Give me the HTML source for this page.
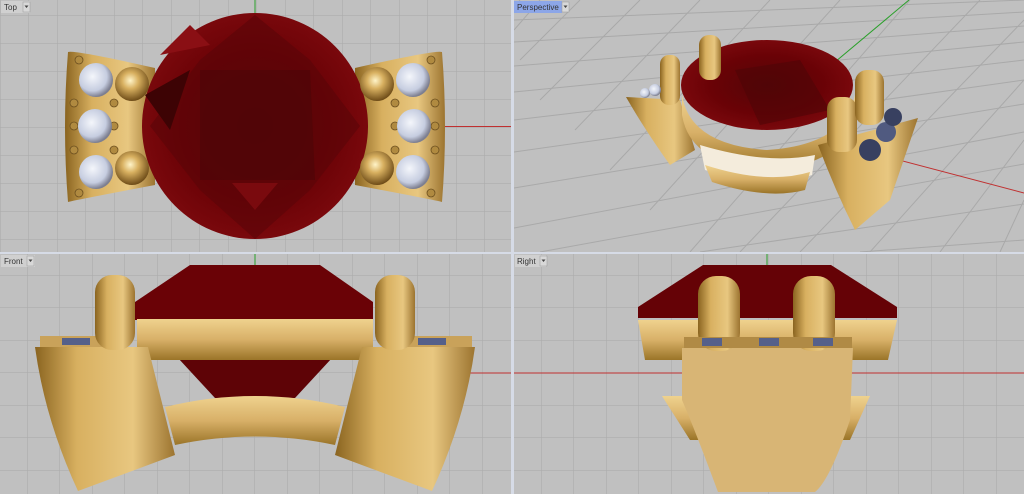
<!DOCTYPE html><html><head><style>
html,body{margin:0;padding:0;background:#d6dbe6;}
svg{display:block}
text{font-family:"Liberation Sans",sans-serif;font-size:8px;fill:#333}
</style></head><body>
<svg width="1024" height="494" viewBox="0 0 1024 494" xmlns="http://www.w3.org/2000/svg">
<defs>
<pattern id="g" width="28.5" height="28" patternUnits="userSpaceOnUse" x="0" y="15"><path d="M0 0H28.5M0 0V28" stroke="#a9a9a9" stroke-width="1" fill="none"/></pattern>
<pattern id="g3" width="32.5" height="32.5" patternUnits="userSpaceOnUse" x="27" y="15"><path d="M0 0H32.5M0 0V32.5" stroke="#a9a9a9" stroke-width="1" fill="none"/></pattern>
<pattern id="g2" width="32.5" height="32.5" patternUnits="userSpaceOnUse" x="541" y="15"><path d="M0 0H32.5M0 0V32.5" stroke="#a9a9a9" stroke-width="1" fill="none"/></pattern>
<linearGradient id="gold" x1="0" y1="0" x2="0" y2="1"><stop offset="0" stop-color="#efd28e"/><stop offset=".5" stop-color="#d8b068"/><stop offset="1" stop-color="#9a7428"/></linearGradient>
<linearGradient id="goldh" x1="0" y1="0" x2="1" y2="0"><stop offset="0" stop-color="#8a6420"/><stop offset=".3" stop-color="#d8b060"/><stop offset=".7" stop-color="#e8c780"/><stop offset="1" stop-color="#9c7430"/></linearGradient>
<radialGradient id="ball" cx=".45" cy=".4" r=".6"><stop offset="0" stop-color="#fff4c8"/><stop offset=".4" stop-color="#d8b060"/><stop offset="1" stop-color="#6e4c18"/></radialGradient>
<radialGradient id="dia" cx=".4" cy=".4" r=".6"><stop offset="0" stop-color="#f4f6fb"/><stop offset=".7" stop-color="#c6cde0"/><stop offset="1" stop-color="#7d7f90"/></radialGradient>
<radialGradient id="ruby" cx=".5" cy=".5" r=".55"><stop offset="0" stop-color="#540608"/><stop offset=".6" stop-color="#6a0206"/><stop offset="1" stop-color="#7e0a0e"/></radialGradient>
<clipPath id="c1"><rect x="0" y="0" width="511" height="252"/></clipPath>
<clipPath id="c2"><rect x="514" y="0" width="510" height="252"/></clipPath>
<clipPath id="c3"><rect x="0" y="254" width="511" height="240"/></clipPath>
<clipPath id="c4"><rect x="514" y="254" width="510" height="240"/></clipPath>
</defs>

<!-- TOP -->
<g clip-path="url(#c1)">
<rect x="0" y="0" width="511" height="252" fill="#c0c0c0"/>
<rect x="0" y="0" width="511" height="252" fill="url(#g)"/>
<line x1="255" y1="0" x2="255" y2="16" stroke="#2aa02a"/>
<line x1="445" y1="126.5" x2="511" y2="126.5" stroke="#c03030"/>
<path d="M68 52 Q75 50 155 68 L155 185 Q75 200 68 202 Q62 127 68 52Z" fill="url(#goldh)"/>
<path d="M442 52 Q435 50 355 68 L355 185 Q435 200 442 202 Q448 127 442 52Z" fill="url(#goldh)"/>
<g fill="#b08a40" stroke="#6d5020" stroke-width=".8">
<circle cx="79" cy="60" r="4"/><circle cx="74" cy="103" r="4"/><circle cx="74" cy="126" r="4"/><circle cx="74" cy="150" r="4"/><circle cx="79" cy="193" r="4"/>
<circle cx="114" cy="103" r="4"/><circle cx="114" cy="126" r="4"/><circle cx="114" cy="150" r="4"/>
<circle cx="431" cy="60" r="4"/><circle cx="435" cy="103" r="4"/><circle cx="435" cy="126" r="4"/><circle cx="435" cy="150" r="4"/><circle cx="431" cy="193" r="4"/>
<circle cx="395" cy="103" r="4"/><circle cx="395" cy="126" r="4"/><circle cx="395" cy="150" r="4"/>
</g>
<g fill="url(#dia)">
<circle cx="96" cy="80" r="17"/><circle cx="95" cy="126" r="17"/><circle cx="96" cy="172" r="17"/>
<circle cx="413" cy="80" r="17"/><circle cx="414" cy="126" r="17"/><circle cx="413" cy="172" r="17"/>
</g>
<circle cx="255" cy="126" r="113" fill="url(#ruby)"/>
<path d="M255 15 L200 60 L150 126 L200 190 L255 239 L310 190 L360 126 L310 60Z" fill="#5a0508" opacity=".6"/>
<path d="M200 70 L310 70 L315 180 L200 180Z" fill="#4e0507" opacity=".7"/>
<path d="M160 55 L190 25 L210 45Z" fill="#8a0f14"/>
<path d="M145 95 L190 70 L170 130Z" fill="#3d0304"/>
<path d="M255 210 L232 183 L278 183Z" fill="#7a0a0e"/>
<circle cx="132" cy="84" r="17" fill="url(#ball)"/><circle cx="132" cy="168" r="17" fill="url(#ball)"/>
<circle cx="377" cy="84" r="17" fill="url(#ball)"/><circle cx="377" cy="168" r="17" fill="url(#ball)"/>
<rect x="1" y="1" width="29" height="12" fill="#d0d0d0"/><text x="4" y="10">Top</text><rect x="23" y="2" width="7" height="10" fill="#d8d8d8" stroke="#999" stroke-width=".5"/><path d="M24.5 5.5h4l-2 2.5z" fill="#444"/>
</g>

<!-- PERSPECTIVE -->
<g clip-path="url(#c2)">
<rect x="514" y="0" width="510" height="252" fill="#c0c0c0"/>
<g stroke="#a9a9a9" stroke-width="1" fill="none">
<path d="M514 20L1024 0M514 42L1024 12M514 66L1024 26M514 92L1024 42M514 120L1024 60M514 152L1024 80M514 188L1024 104M514 228L1024 132M540 252L1024 164M700 252L1024 204M860 252L1024 240"/>
<path d="M520 0L514 8M580 0L520 60M640 0L540 100M700 0L575 130M770 0L610 170M840 0L650 210M910 0L690 252M980 0L740 252M1024 20L800 252M1024 80L870 252M1024 140L940 252M1024 200L1000 252M514 30L540 0"/>
</g>
<line x1="880" y1="155" x2="1024" y2="193" stroke="#c03030"/>
<line x1="835" y1="62" x2="909" y2="0" stroke="#2aa02a"/>
<path d="M626 97 L680 100 L695 150 L670 165 Q645 130 626 97Z" fill="url(#goldh)"/>
<path d="M682 95 Q690 145 767 150 Q845 145 855 95 L855 115 Q845 165 767 170 Q690 165 682 115Z" fill="url(#gold)"/>
<path d="M700 145 Q767 165 815 155 L812 175 Q767 190 705 170Z" fill="#f4ecdc"/>
<path d="M705 165 Q767 185 810 172 L805 190 Q767 200 712 182Z" fill="url(#gold)"/>
<ellipse cx="767" cy="85" rx="86" ry="45" fill="url(#ruby)"/>
<path d="M735 70 L800 60 L830 110 L760 125Z" fill="#4e0507" opacity=".6"/>
<path d="M818 145 L918 118 L890 200 L855 230 Q835 190 818 145Z" fill="url(#goldh)"/>
<rect x="660" y="55" width="20" height="50" rx="9" fill="url(#goldh)"/>
<rect x="699" y="35" width="22" height="45" rx="10" fill="url(#goldh)"/>
<rect x="827" y="97" width="30" height="55" rx="12" fill="url(#goldh)"/>
<rect x="855" y="70" width="29" height="55" rx="12" fill="url(#goldh)"/>
<circle cx="870" cy="150" r="11" fill="#384060"/><circle cx="886" cy="132" r="10" fill="#505a80"/><circle cx="893" cy="117" r="9" fill="#384060"/>
<circle cx="655" cy="90" r="6" fill="url(#dia)"/><circle cx="645" cy="93" r="5" fill="url(#dia)"/>
<rect x="514" y="1" width="48" height="12" fill="#8ca6e8"/><text x="517" y="10">Perspective</text><rect x="562" y="2" width="7" height="10" fill="#d8d8d8" stroke="#999" stroke-width=".5"/><path d="M563.5 5.5h4l-2 2.5z" fill="#444"/>
</g>

<!-- FRONT -->
<g clip-path="url(#c3)">
<rect x="0" y="254" width="511" height="240" fill="#c0c0c0"/>
<rect x="0" y="254" width="511" height="240" fill="url(#g3)"/>
<line x1="255" y1="254" x2="255" y2="268" stroke="#2aa02a"/>
<line x1="470" y1="373" x2="511" y2="373" stroke="#c03030"/>
<path d="M190 265 L320 265 L373 302 L373 320 L135 320 L135 302Z" fill="#6a0206"/>
<path d="M178 358 L332 358 L295 398 L215 398Z" fill="#5e0306"/>
<path d="M137 319 L373 319 L373 360 L137 360Z" fill="url(#gold)"/>
<path d="M165 407 Q255 385 345 407 L335 445 Q255 428 175 445Z" fill="url(#gold)"/>
<path d="M35 347 L148 347 L175 455 L78 491 Q45 420 35 347Z" fill="url(#goldh)"/>
<path d="M475 347 L362 347 L335 455 L432 491 Q465 420 475 347Z" fill="url(#goldh)"/>
<rect x="40" y="336" width="70" height="11" fill="#c9a25a"/>
<rect x="400" y="336" width="72" height="11" fill="#c9a25a"/>
<rect x="62" y="338" width="28" height="7" fill="#55608a"/><rect x="418" y="338" width="28" height="7" fill="#55608a"/>
<rect x="95" y="275" width="40" height="75" rx="17" fill="url(#goldh)"/>
<rect x="375" y="275" width="40" height="75" rx="17" fill="url(#goldh)"/>
<rect x="1" y="255" width="34" height="12" fill="#d0d0d0"/><text x="4" y="264">Front</text><rect x="27" y="256" width="7" height="10" fill="#d8d8d8" stroke="#999" stroke-width=".5"/><path d="M28.5 259.5h4l-2 2.5z" fill="#444"/>
</g>

<!-- RIGHT -->
<g clip-path="url(#c4)">
<rect x="514" y="254" width="510" height="240" fill="#c0c0c0"/>
<rect x="514" y="254" width="510" height="240" fill="url(#g2)"/>
<line x1="767" y1="254" x2="767" y2="265" stroke="#2aa02a"/>
<line x1="514" y1="373" x2="1024" y2="373" stroke="#c03030"/>
<path d="M703 265 L831 265 L897 307 L897 318 L638 318 L638 307Z" fill="#650206"/>
<path d="M638 320 L897 320 L888 360 L645 360Z" fill="url(#gold)"/>
<path d="M662 396 L870 396 L850 440 L690 440Z" fill="url(#gold)"/>
<path d="M682 348 L853 348 L850 420 Q830 480 815 492 L718 492 Q695 430 682 400Z" fill="#d8b575"/>
<rect x="698" y="276" width="42" height="75" rx="18" fill="url(#goldh)"/>
<rect x="793" y="276" width="42" height="75" rx="18" fill="url(#goldh)"/>
<rect x="684" y="337" width="168" height="11" fill="#b08a45"/>
<rect x="702" y="338" width="20" height="8" fill="#55608a"/><rect x="759" y="338" width="20" height="8" fill="#55608a"/><rect x="813" y="338" width="20" height="8" fill="#55608a"/>
<rect x="515" y="255" width="31" height="12" fill="#d0d0d0"/><text x="517" y="264">Right</text><rect x="540" y="256" width="7" height="10" fill="#d8d8d8" stroke="#999" stroke-width=".5"/><path d="M541.5 259.5h4l-2 2.5z" fill="#444"/>
</g>
</svg>
</body></html>
